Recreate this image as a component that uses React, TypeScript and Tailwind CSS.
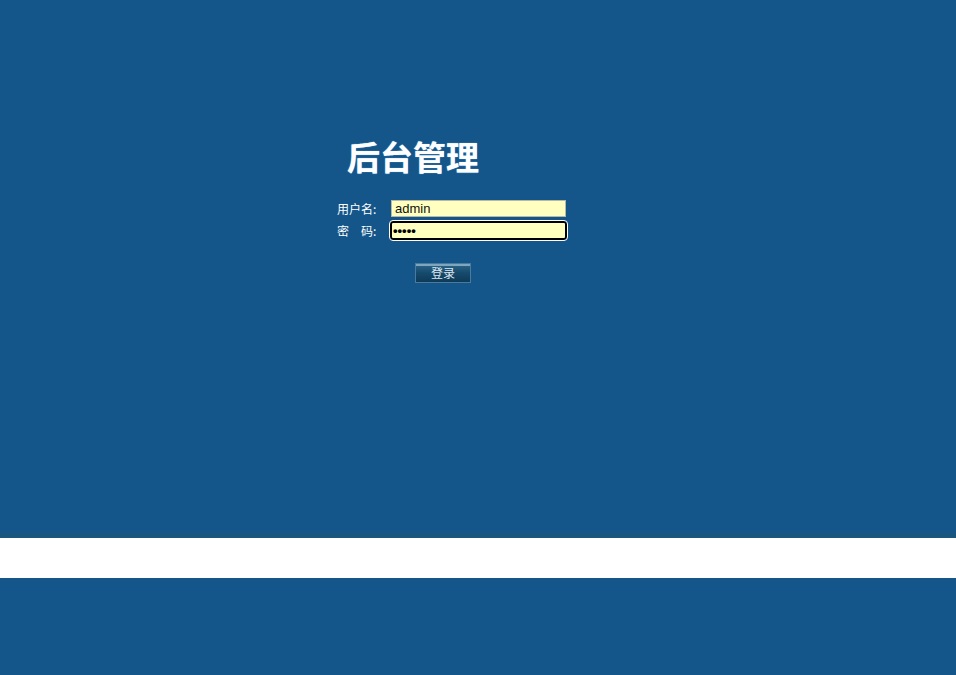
export default function App() {
  return (
    <div className="flex h-[675px] w-full flex-col bg-[#14568a] font-['Noto_Sans_CJK_SC',sans-serif]">
      <div className="h-[533px] pl-[337px] pt-[134px]">
        <h1 className="ml-[10px] text-[33px] font-bold leading-[44px] text-white [text-shadow:0_0_1px_#9fd8ff]">
          后台管理
        </h1>
        <div className="mt-[22px] flex flex-col gap-[4px] text-[12px] text-white">
          <div className="flex items-center">
            <span className="w-[54px] leading-[17px]">用户名:</span>
            <div className="flex h-[17px] w-[175px] items-center border border-[#b8b8a8] bg-[#ffffc0] px-[3px] font-['Liberation_Sans',sans-serif] text-[13px] text-[#111]">
              admin
            </div>
          </div>
          <div className="flex items-center">
            <span className="w-[53px] leading-[19px]">密　码:</span>
            <div className="flex h-[19px] w-[177px] items-center rounded-[3px] border-2 border-black bg-[#ffffc0] px-[1px] font-['Liberation_Sans',sans-serif] text-[13px] font-bold leading-none text-black outline outline-1 outline-white">
              •••••
            </div>
          </div>
        </div>
        <div className="ml-[78px] mt-[23px]">
          <button className="flex h-[20px] w-[56px] items-center justify-center border border-[#4b7b9c] bg-gradient-to-b from-[#2d6689] via-[#164a6c] to-[#0e3a58] text-[12px] text-[#dfe8ee] shadow-[inset_0_2px_0_#7fa6bf]">
            登录
          </button>
        </div>
      </div>
      <div className="h-[5px] bg-[#1a5580]" />
      <div className="h-[40px] bg-white" />
      <div className="flex-1" />
    </div>
  );
}
